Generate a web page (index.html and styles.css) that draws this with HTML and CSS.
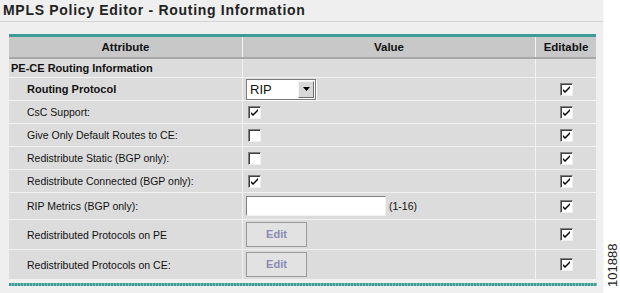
FILE: index.html
```html
<!DOCTYPE html>
<html lang="en">
  <head>
    <meta charset="UTF-8" />
    <title>MPLS Policy Editor - Routing Information</title>
    <link rel="stylesheet" href="styles.css">
  </head>
  <body>
    <div class="page">
      <div class="panel">
        <h1 class="title">MPLS Policy Editor - Routing Information</h1>

        <div class="grid-wrap">
          <table class="grid">
            <tr class="head">
              <th class="col-attr">Attribute</th>
              <th class="col-value">Value</th>
              <th class="col-edit">Editable</th>
            </tr>
            <tr class="group">
              <td>PE-CE Routing Information</td>
              <td></td>
              <td></td>
            </tr>
            <tr class="row-select">
              <td class="label strong">Routing Protocol</td>
              <td>
                <span class="select"><span class="select-text">RIP</span><span class="select-btn"><svg width="7" height="4" viewBox="0 0 7 4"><path d="M0 0h7L3.5 4z" fill="#000"/></svg></span></span>
              </td>
              <td class="center"><span class="check on"></span></td>
            </tr>
            <tr>
              <td class="label">CsC Support:</td>
              <td><span class="check on"></span></td>
              <td class="center"><span class="check on"></span></td>
            </tr>
            <tr>
              <td class="label">Give Only Default Routes to CE:</td>
              <td><span class="check"></span></td>
              <td class="center"><span class="check on"></span></td>
            </tr>
            <tr>
              <td class="label">Redistribute Static (BGP only):</td>
              <td><span class="check"></span></td>
              <td class="center"><span class="check on"></span></td>
            </tr>
            <tr>
              <td class="label">Redistribute Connected (BGP only):</td>
              <td><span class="check on"></span></td>
              <td class="center"><span class="check on"></span></td>
            </tr>
            <tr class="row-input">
              <td class="label">RIP Metrics (BGP only):</td>
              <td><span class="field"></span><span class="hint">(1-16)</span></td>
              <td class="center"><span class="check on"></span></td>
            </tr>
            <tr class="row-btn">
              <td class="label">Redistributed Protocols on PE</td>
              <td><span class="btn">Edit</span></td>
              <td class="center"><span class="check on"></span></td>
            </tr>
            <tr class="row-btn">
              <td class="label">Redistributed Protocols on CE:</td>
              <td><span class="btn">Edit</span></td>
              <td class="center"><span class="check on"></span></td>
            </tr>
          </table>
          <div class="teal-bottom"></div>
        </div>
      </div>
      <div class="fig-id">101888</div>
    </div>
  </body>
</html>
```

FILE: styles.css
```css
body {
  margin: 0;
  background-color: #fff;
  font-family: "Liberation Sans", Arial, sans-serif;
}
.page {
  display: flex;
  width: 620px;
  height: 293px;
}
.panel {
  width: 606px;
  background-color: #efeff0;
  border-right: 1px solid #f8f8f8;
}
.title {
  margin: 0;
  padding: 2px 0 0 3px;
  height: 19px;
  font-size: 14px;
  letter-spacing: 0.7px;
  color: #222;
  border-bottom: 1px solid #d4d4d6;
}
.grid-wrap {
  margin: 12px 0 0 9px;
  width: 588px;
}
.grid {
  width: 587px;
  border-collapse: collapse;
  border-top: 3px solid #3d9c96;
  background-color: #dcdcdc;
  font-size: 10.5px;
  color: #111;
}
.grid td,
.grid th {
  padding: 0;
  border-left: 1px solid #f2f2f2;
  border-bottom: 1px solid #f2f2f2;
}
.grid td:first-child,
.grid th:first-child {
  border-left: none;
}
.head th {
  height: 20px;
  background-color: #c8c8c8;
  border-top: 1px solid #eef4f6;
  border-bottom: 2px solid #a8a8a8;
  font-size: 11.5px;
}
.col-attr {
  width: 233px;
}
.col-edit {
  width: 60px;
}
.group td {
  font-size: 11px;
  font-weight: bold;
  padding-left: 2px;
}
.group td + td {
  padding-left: 0;
}
.grid tr td {
  height: 22px;
}
.grid .group td {
  height: 18px;
}
.grid .row-input td {
  height: 26px;
}
.grid .row-btn td {
  height: 29px;
}
.label {
  padding-left: 18px !important;
}
.strong {
  font-size: 11px;
  font-weight: bold;
}
.grid td:nth-child(2) {
  padding-left: 5px;
}
.center {
  text-align: center;
}
.check {
  display: inline-block;
  width: 11px;
  height: 11px;
  vertical-align: middle;
  background-color: #fff;
  border-top: 1px solid #808080;
  border-left: 1px solid #808080;
  border-right: 1px solid #f0f0f0;
  border-bottom: 1px solid #f0f0f0;
  box-shadow: inset 1px 1px 0 #404040;
}
.check.on {
  background-image: url("data:image/svg+xml,%3Csvg xmlns='http://www.w3.org/2000/svg' width='11' height='11'%3E%3Cpath d='M2 5l2 2 5-5v2l-5 5-2-2z' fill='%23000'/%3E%3C/svg%3E");
}
.select {
  display: inline-flex;
  width: 68px;
  height: 19px;
  margin-left: -2px;
  vertical-align: middle;
  background-color: #fff;
  border: 1px solid #7a7a7a;
  box-shadow: 1px 1px 0 #fff;
}
.select-text {
  flex: 1;
  padding: 1px 0 0 3px;
  font-size: 13px;
  line-height: 17px;
}
.select-btn {
  width: 14px;
  height: 15px;
  margin: 1px;
  display: flex;
  align-items: center;
  justify-content: center;
  background-color: #d8d8d8;
  border-top: 1px solid #f4f4f4;
  border-left: 1px solid #f4f4f4;
  border-right: 1px solid #707070;
  border-bottom: 1px solid #707070;
}
.field {
  display: inline-block;
  width: 138px;
  height: 18px;
  margin-left: -2px;
  vertical-align: middle;
  background-color: #fff;
  border-top: 1px solid #808080;
  border-left: 1px solid #808080;
  border-right: 1px solid #f4f4f4;
  border-bottom: 1px solid #f4f4f4;
}
.hint {
  margin-left: 3px;
  vertical-align: middle;
}
.btn {
  display: inline-block;
  width: 59px;
  height: 23px;
  margin-left: -2px;
  line-height: 23px;
  text-align: center;
  vertical-align: middle;
  font-size: 11px;
  font-weight: bold;
  color: #8a8ab4;
  background-color: #e2e2e2;
  border: 1px solid #9a9a9a;
}
.teal-bottom {
  height: 3px;
  margin-top: 3px;
  background: repeating-linear-gradient(90deg, #3d9c96 0 2px, #7cc0bb 2px 3px);
}
.fig-id {
  margin-top: 229px;
  margin-left: 1px;
  writing-mode: vertical-rl;
  transform: rotate(180deg);
  font-size: 13px;
  height: 58px;
  color: #222;
}
```
